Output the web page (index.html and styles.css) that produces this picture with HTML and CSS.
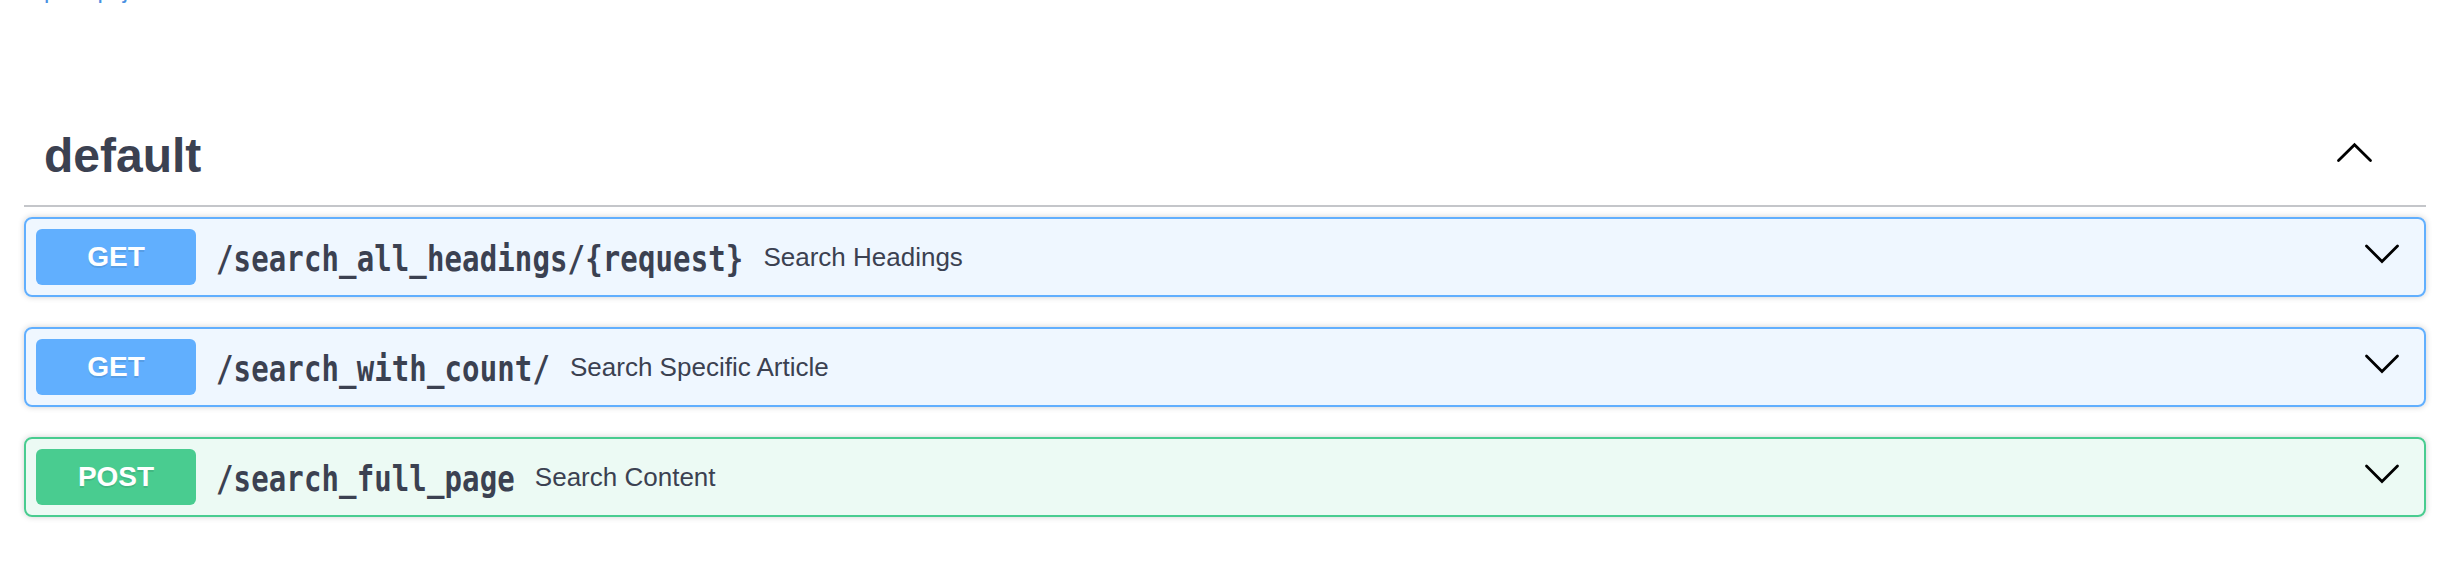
FILE: index.html
```
<!DOCTYPE html>
<html lang="en">
<head>
<meta charset="utf-8">
<title>default</title>
<link rel="stylesheet" href="styles.css">
</head>
<body>
<div class="wrapper">
  <div class="info"><a class="url" href="#">/openapi.json</a></div>
  <section class="tag-section">
    <h3 class="tag">
      <span class="tag-name">default</span>
      <svg class="arrow" width="40" height="40" viewBox="0 0 40 40"><polyline points="4.5,24.5 20.5,8.8 36.5,24.5"/></svg>
    </h3>
    <div class="opblock opblock-get">
      <div class="summary">
        <span class="method">GET</span>
        <span class="path">/search_all_headings/{request}</span>
        <span class="desc">Search Headings</span>
        <svg class="arrow" width="40" height="40" viewBox="0 0 40 40"><polyline points="4.5,9 20,24.5 35.5,9"/></svg>
      </div>
    </div>
    <div class="opblock opblock-get">
      <div class="summary">
        <span class="method">GET</span>
        <span class="path">/search_with_count/</span>
        <span class="desc">Search Specific Article</span>
        <svg class="arrow" width="40" height="40" viewBox="0 0 40 40"><polyline points="4.5,9 20,24.5 35.5,9"/></svg>
      </div>
    </div>
    <div class="opblock opblock-post">
      <div class="summary">
        <span class="method">POST</span>
        <span class="path">/search_full_page</span>
        <span class="desc">Search Content</span>
        <svg class="arrow" width="40" height="40" viewBox="0 0 40 40"><polyline points="4.5,9 20,24.5 35.5,9"/></svg>
      </div>
    </div>
  </section>
</div>
</body>
</html>
```
FILE: styles.css
```
html, body {
  margin: 0;
  padding: 0;
  background: #ffffff;
}
body {
  font-family: "Liberation Sans", Arial, sans-serif;
  color: #3b4151;
  overflow: hidden;
}
.wrapper {
  padding: 0 20px 0 24px;
}
.info {
  margin-top: -24px;
  margin-bottom: 105px;
  font-size: 24px;
  line-height: 28px;
}
.info .url {
  color: #4990e2;
  text-decoration: none;
}
.tag {
  display: flex;
  align-items: center;
  margin: 0 0 10px 0;
  padding: 20px 52px 22px 20px;
  border-bottom: 2px solid rgba(59, 65, 81, 0.3);
  font-size: 48px;
  line-height: 54px;
  font-weight: 700;
  color: #3b4151;
}
.tag-name {
  flex: 1;
}
.arrow {
  flex: none;
  display: block;
}
.arrow polyline {
  fill: none;
  stroke: #000000;
  stroke-width: 2.8;
  stroke-linecap: round;
  stroke-linejoin: miter;
}
.opblock {
  border: 2px solid #61affe;
  border-radius: 8px;
  background: rgba(97, 175, 254, 0.1);
  box-shadow: 0 0 6px rgba(0, 0, 0, 0.19);
  margin-bottom: 30px;
}
.opblock-post {
  border-color: #49cc90;
  background: rgba(73, 204, 144, 0.1);
}
.summary {
  display: flex;
  align-items: center;
  padding: 10px;
}
.method {
  flex: none;
  width: 160px;
  height: 56px;
  display: flex;
  align-items: center;
  justify-content: center;
  border-radius: 6px;
  background: #61affe;
  color: #ffffff;
  font-size: 28px;
  font-weight: 700;
  text-shadow: 0 2px 0 rgba(0, 0, 0, 0.1);
}
.opblock-post .method {
  background: #49cc90;
}
.path {
  flex: none;
  display: inline-block;
  padding: 0 20px;
  font-family: "DejaVu Sans Mono", "Liberation Mono", monospace;
  font-weight: 700;
  font-size: 29px;
  letter-spacing: 0.12px;
  line-height: 40px;
  color: #3b4151;
  transform: translateY(1px) scaleY(1.25);
}
.desc {
  flex: 1;
  font-size: 26px;
  line-height: 40px;
  color: #3b4151;
}
.summary .arrow {
  margin-right: 12px;
}
```
